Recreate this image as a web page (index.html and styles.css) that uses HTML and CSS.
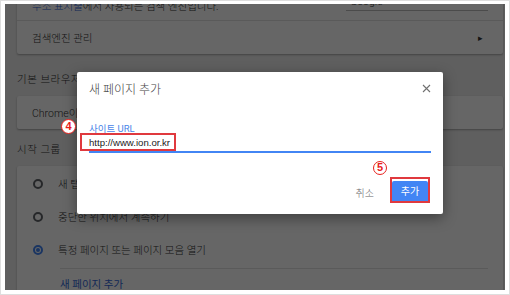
FILE: index.html
```html
<!DOCTYPE html>
<html lang="ko">
<head>
  <meta charset="UTF-8" />
  <title>새 페이지 추가</title>
  <link rel="stylesheet" href="styles.css">
</head>
<body>
  <div class="screen">
    <div class="page">

      <div class="card">
        <div class="row row-top">
          <span><span class="link">주소 표시줄</span>에서 사용되는 검색 엔진입니다.</span>
          <span class="select">Google <span class="caret">▾</span></span>
        </div>
        <div class="row row-line">
          <span>검색엔진 관리</span>
          <span class="arrow">▸</span>
        </div>
      </div>

      <div class="section">기본 브라우저</div>
      <div class="card">
        <div class="row row-short">
          <span>Chrome이 기본 브라우저가 아닙니다</span>
        </div>
      </div>

      <div class="section section-start">시작 그룹</div>
      <div class="card card-start">
        <div class="radio-row"><span class="radio"></span>새 탭 페이지 열기</div>
        <div class="radio-row"><span class="radio"></span>중단한 위치에서 계속하기</div>
        <div class="radio-row"><span class="radio checked"></span>특정 페이지 또는 페이지 모음 열기</div>
        <div class="divider"></div>
        <div class="add-row link">새 페이지 추가</div>
      </div>

      <div class="overlay"></div>

      <div class="dialog">
        <div class="dialog-head">
          <span class="dialog-title">새 페이지 추가</span>
          <svg class="close" width="9" height="9" viewBox="0 0 9 9">
            <path d="M1 1 L8 8 M8 1 L1 8" stroke="#707070" stroke-width="1.1" fill="none"/>
          </svg>
        </div>
        <div class="field">
          <div class="field-label">사이트 URL</div>
          <div class="field-input">http://www.ion.or.kr</div>
        </div>
        <div class="dialog-buttons">
          <span class="btn-cancel">취소</span>
          <span class="btn-add">추가</span>
        </div>

        <!-- 안내 표시 -->
        <div class="mark mark-input"></div>
        <div class="mark mark-button"></div>
        <span class="num num-4">4</span>
        <span class="num num-5">5</span>
      </div>

    </div>
  </div>
</body>
</html>
```

FILE: styles.css
```css
body {
  margin: 0;
  background: #fff;
  font-family: Roboto, "Noto Sans CJK KR", sans-serif;
  color: #333;
}

.screen {
  width: 510px;
  height: 295px;
  box-sizing: border-box;
  border: 1px solid #dedede;
  padding: 3px 4px 4px 4px;
}

.page {
  position: relative;
  height: 286px;
  overflow: hidden;
  background: #ededed;
  padding: 0 2px 0 12px;
  font-size: 10.5px;
  font-weight: 300;
}

.card {
  background: #fff;
  border-radius: 2px;
  box-shadow: 0 1px 2px rgba(0,0,0,0.3);
}

.card:first-child {
  margin-top: -14px;
}

.row {
  display: flex;
  align-items: center;
  justify-content: space-between;
  padding: 0 20px 0 15px;
}

.row-top {
  height: 30px;
}

.row-line {
  height: 33px;
  border-top: 1px solid #e0e0e0;
}

.row-short {
  height: 33px;
}

.link {
  color: #3367d6;
}

.select {
  width: 136px;
  display: flex;
  justify-content: space-between;
  align-items: center;
  border-bottom: 1px solid #bbb;
  padding: 0 2px 2px 4px;
  margin: -5px -5px 0 0;
}

.caret {
  font-size: 8px;
}

.arrow {
  font-size: 9px;
}

.section {
  padding: 18px 0 8px 0;
  line-height: 16px;
  letter-spacing: 0.5px;
}

.section-start {
  padding: 13px 0 8px 0;
}

.card-start {
  padding-top: 1px;
  height: 140px;
}

.radio-row {
  height: 33px;
  display: flex;
  align-items: center;
  padding-left: 16px;
}

.radio {
  width: 10px;
  height: 10px;
  box-sizing: border-box;
  border: 2px solid #5f6368;
  border-radius: 50%;
  margin-right: 15px;
  position: relative;
}

.radio.checked {
  border-color: #4285f4;
}

.radio.checked::after {
  content: "";
  position: absolute;
  left: 1px;
  top: 1px;
  width: 4px;
  height: 4px;
  border-radius: 50%;
  background: #4285f4;
}

.divider {
  margin: 2px 15px 0 43px;
  border-top: 1px solid #e0e0e0;
}

.add-row {
  height: 32px;
  line-height: 32px;
  padding-left: 43px;
  font-weight: 400;
}

.overlay {
  position: absolute;
  left: 0;
  top: 0;
  right: 0;
  bottom: 0;
  background: rgba(0,0,0,0.6);
}

.dialog {
  position: absolute;
  left: 72px;
  top: 68px;
  width: 366px;
  height: 142px;
  background: #fff;
  border-radius: 2px;
  box-shadow: 0 4px 14px rgba(0,0,0,0.4);
}

.dialog-head {
  display: flex;
  justify-content: space-between;
  align-items: center;
  padding: 9px 12px 0 12px;
  height: 15px;
}

.dialog-title {
  font-size: 12px;
  letter-spacing: 0;
  color: #444;
  font-weight: 300;
}

.field {
  padding: 26px 12px 0 12px;
}

.field-label {
  font-size: 9.5px;
  color: #4a86e8;
  line-height: 14px;
  font-weight: 400;
}

.field-input {
  font-family: "Liberation Sans", Arial, sans-serif;
  font-size: 9.6px;
  line-height: 14px;
  padding: 0 0 1px 0;
  border-bottom: 2px solid #4285f4;
  color: #222;
  font-weight: 400;
}

.dialog-buttons {
  display: flex;
  justify-content: flex-end;
  align-items: center;
  gap: 18px;
  padding: 28px 15px 0 0;
}

.btn-cancel {
  font-size: 10px;
  color: #666;
}

.btn-add {
  width: 36px;
  height: 22px;
  line-height: 22px;
  text-align: center;
  background: #4285f4;
  color: #fff;
  font-size: 10px;
  font-weight: 400;
  border-radius: 2px;
}

.mark {
  position: absolute;
  border: 2px solid #e0393e;
  box-sizing: border-box;
}

.mark-input {
  left: 3px;
  top: 61px;
  width: 96px;
  height: 18px;
}

.mark-button {
  left: 313px;
  top: 105px;
  width: 40px;
  height: 26px;
}

.num {
  position: absolute;
  width: 15px;
  height: 15px;
  box-sizing: border-box;
  border: 1.6px solid #e8201c;
  border-radius: 50%;
  background: #fff;
  color: #e8201c;
  font-family: "Liberation Sans", Arial, sans-serif;
  font-size: 11px;
  font-weight: bold;
  line-height: 12px;
  text-align: center;
}

.num-4 {
  left: -16px;
  top: 47px;
}

.num-5 {
  left: 296px;
  top: 89px;
  width: 14px;
  height: 14px;
  line-height: 11px;
}
```
